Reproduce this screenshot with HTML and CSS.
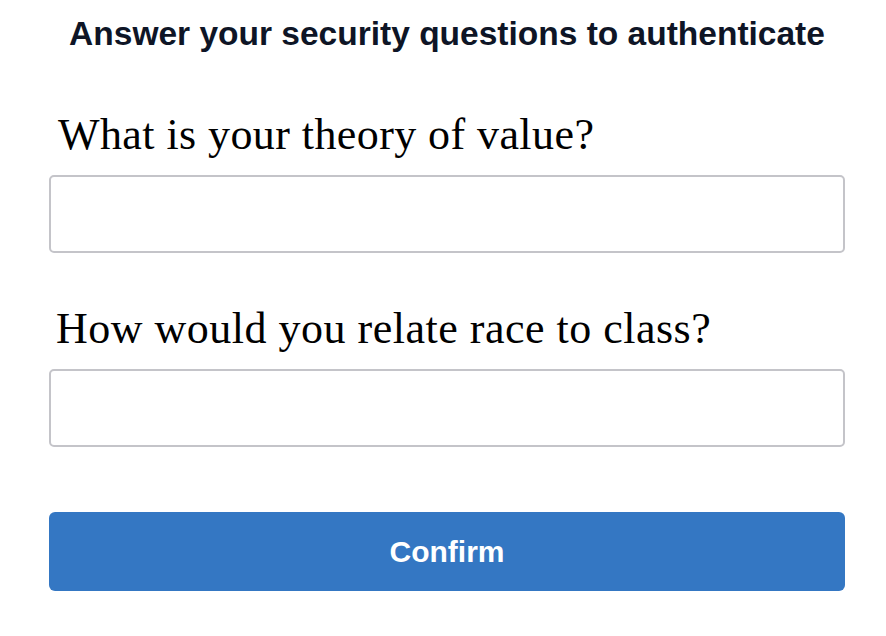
FILE: index.html
```html
<!DOCTYPE html>
<html>
<head>
<meta charset="utf-8">
<link rel="stylesheet" href="styles.css">
</head>
<body>
<div class="page">
  <h1 class="title">Answer your security questions to authenticate</h1>
  <form class="form">
    <label class="question">What is your theory of value?</label>
    <input class="answer" type="text">
    <label class="question q2">How would you relate race to class?</label>
    <input class="answer" type="text">
    <button class="confirm" type="button">Confirm</button>
  </form>
</div>
</body>
</html>
```
FILE: styles.css
```css
html, body {
  margin: 0;
  padding: 0;
  background: #ffffff;
}
.page {
  width: 886px;
  height: 636px;
  box-sizing: border-box;
  padding: 14px 41px 0 49px;
}
.title {
  margin: 0;
  font-family: "Liberation Sans", Arial, sans-serif;
  font-weight: bold;
  font-size: 33.5px;
  line-height: 40px;
  color: #0e1526;
  text-align: center;
  white-space: nowrap;
}
.form {
  display: flex;
  flex-direction: column;
}
.question {
  display: block;
  font-family: "Liberation Serif", "Times New Roman", serif;
  font-size: 44px;
  line-height: 50px;
  letter-spacing: 0.42px;
  color: #000000;
  margin: 56px 0 15px 9px;
  white-space: nowrap;
}
.q2 {
  margin-top: 51px;
  margin-bottom: 15px;
  margin-left: 7px;
  letter-spacing: 0.5px;
}
.answer {
  box-sizing: border-box;
  height: 78px;
  width: 796px;
  border: 2px solid #c4c4c9;
  border-radius: 5px;
  background: #fff;
  margin: 0;
  padding: 0 12px;
  font-size: 24px;
  outline: none;
}
.confirm {
  margin-top: 65px;
  box-sizing: border-box;
  width: 796px;
  height: 79px;
  border: none;
  border-radius: 6px;
  background: #3477c3;
  color: #ffffff;
  font-family: "Liberation Sans", Arial, sans-serif;
  font-weight: bold;
  font-size: 30px;
  padding: 0;
}
```
